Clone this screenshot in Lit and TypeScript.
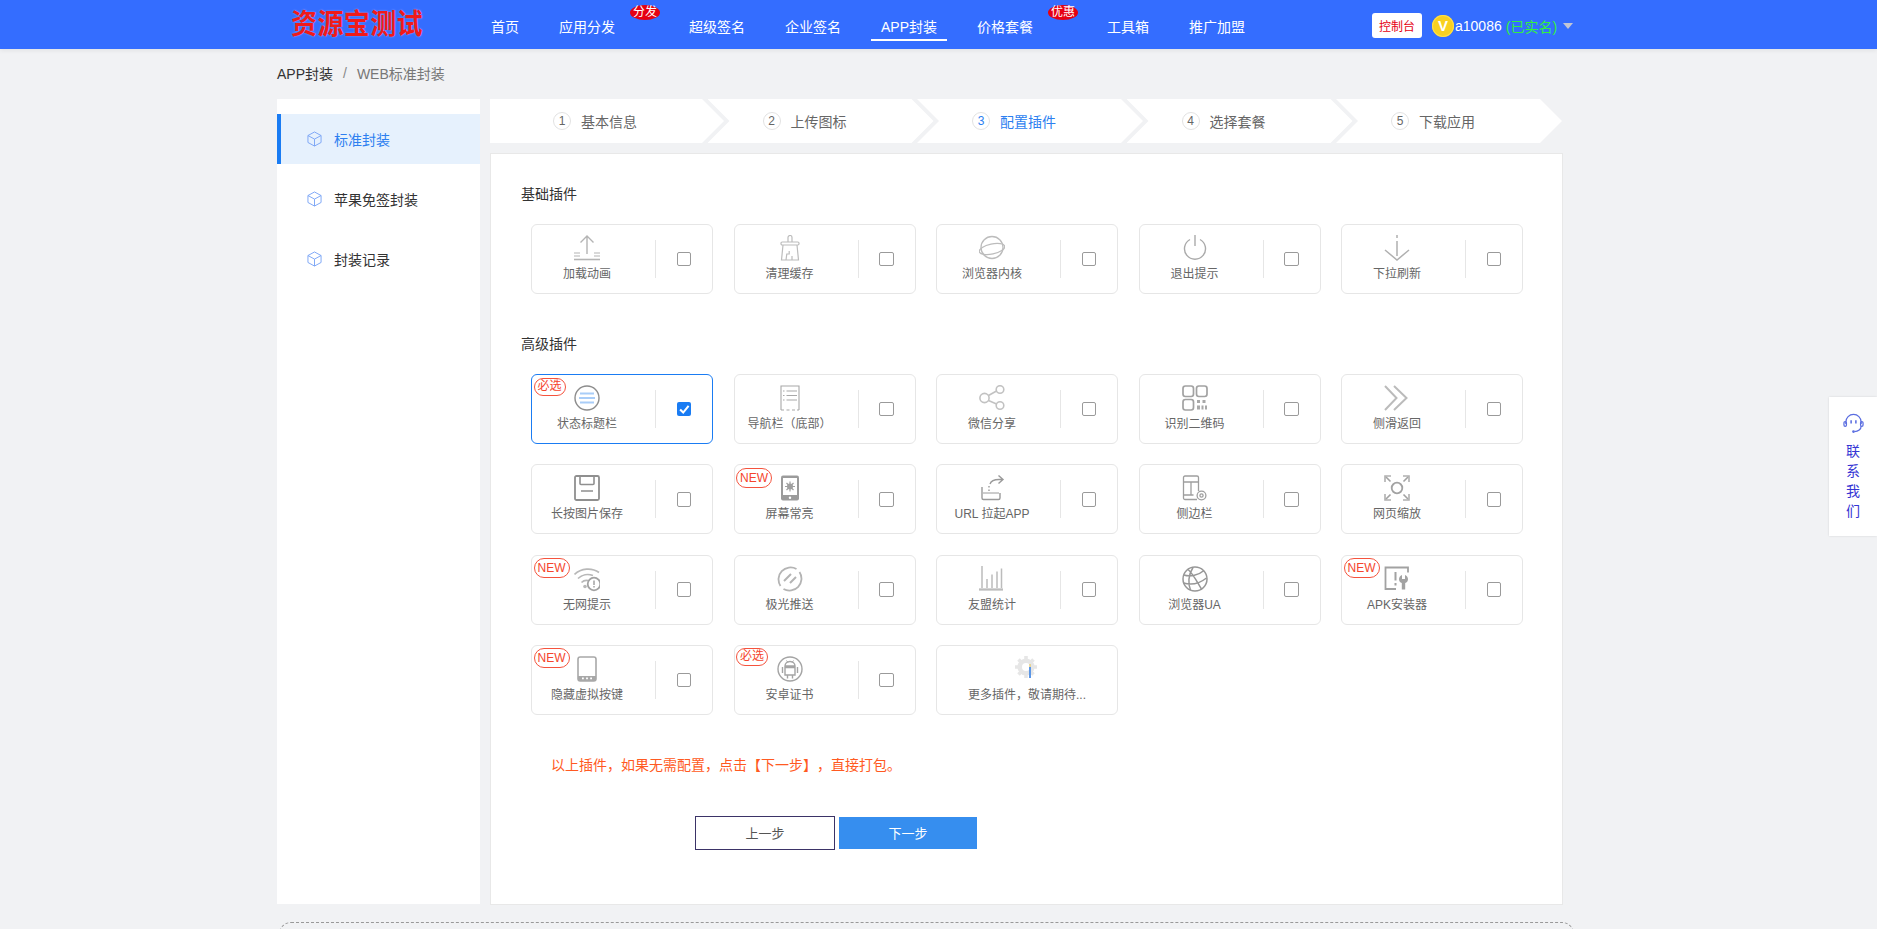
import { css, html, LitElement, svg } from "lit";
import { customElement } from "lit/decorators.js";

type Plugin = {
  name: string;
  icon: keyof typeof icons;
  badge?: "必选" | "NEW";
  checked?: boolean;
};

const icons = {
  upload: svg`<g fill="none" stroke="#b4b4b4" stroke-width="1.4">
    <path d="M13 1v18M6.500 7.500 13 1l6.500 6.500"/>
    <path d="M0 18h6M0 21h6M20 18h6M20 21h6" stroke-width="1.2"/>
    <path d="M0 24.500h26" stroke-width="1.6"/></g>`,
  broom: svg`<g fill="none" stroke="#bcbcbc" stroke-width="1.2">
    <path d="M11 7V2.500a2 2 0 0 1 4 0V7"/>
    <rect x="4" y="7" width="18" height="3" rx="1.2"/>
    <path d="M6 10 4.500 25h17L20 10M9 25l.8-6h2.400v-3M15 25v-4"/></g>`,
  planet: svg`<g fill="none" stroke="#bcbcbc" stroke-width="1.3">
    <circle cx="13" cy="12.500" r="11"/>
    <ellipse cx="13" cy="14" rx="13" ry="5" transform="rotate(-12 13 14)"/></g>`,
  power: svg`<g fill="none" stroke="#aaa" stroke-width="1.4">
    <path d="M13 0v11M8 4.500a10.500 10.500 0 1 0 10 0"/></g>`,
  down: svg`<g fill="none" stroke="#b0b0b0" stroke-width="1.5">
    <path d="M13 0v3M13 6v15M1 15l12 10 12-10"/></g>`,
  status: svg`<circle cx="13" cy="13" r="12" fill="none" stroke="#8d8d8d" stroke-width="1.4"/>
    <path d="M6 8.500h14M5 13h16M6 17.500h14" stroke="#a9cdf8" stroke-width="1.8"/>`,
  navbar: svg`<g fill="none" stroke="#a8a8a8" stroke-width="1.1">
    <path d="M4 25V1h18v24"/>
    <path d="M4 25h3M9.500 25h3M15 25h3M20 25h2"/>
    <path d="M6 6h1.500M9.500 6H20M6 10.500h1.500M9.500 10.500H20M6 15h1.500M9.500 15H20" /></g>`,
  share: svg`<g fill="none" stroke="#c2c2c2" stroke-width="1.6">
    <circle cx="5.500" cy="13" r="4.600"/><circle cx="21" cy="4.500" r="3.800"/><circle cx="21" cy="20.500" r="3.800"/>
    <path d="m9.500 10.500 8-4.500M9.500 15.500l8 3.500"/></g>`,
  qr: svg`<g fill="none" stroke="#a2a2a2" stroke-width="1.7">
    <rect x="1" y="1" width="10.500" height="10.500" rx="2.400"/>
    <rect x="14.500" y="1" width="10.500" height="10.500" rx="2.400"/>
    <rect x="1" y="14.500" width="10.500" height="10.500" rx="2.400"/></g>
    <path d="M15 15h3v3h-3zM20.500 15h3v3h-3zM15 20.500h3v4h-3zM19.500 20.500h2v4h-2zM23 20.500h2v4h-2z" fill="#a8a8a8"/>`,
  chevrons: svg`<g fill="none" stroke="#bbb" stroke-width="2">
    <path d="M1 1l11.500 12L1 25M10 1l12.500 12L10 25"/></g>`,
  save: svg`<g fill="none" stroke="#8f8f8f" stroke-width="1.8">
    <rect x="1" y="1" width="24" height="24" rx="1.500"/>
    <path d="M6 1v7.500a1 1 0 0 0 1 1h12a1 1 0 0 0 1-1V1M7 16h12" stroke-width="1.600"/></g>`,
  screen: svg`<rect x="4" y="0.500" width="18" height="25" rx="2" fill="#9b9b9b"/>
    <rect x="6" y="3" width="14" height="17" fill="#fff"/>
    <circle cx="13" cy="22.800" r="1.200" fill="#fff"/>
    <g stroke="#a0a0a0" stroke-width="1.200"><circle cx="13" cy="11.500" r="2.400" fill="#a0a0a0"/>
    <path d="M13 6.500v10M8 11.500h10M9.500 8l7 7M16.500 8l-7 7"/></g>`,
  url: svg`<g fill="none" stroke="#9a9a9a" stroke-width="1.400">
    <path d="M3 12v11a1.500 1.500 0 0 0 1.500 1.500h15A1.500 1.500 0 0 0 21 23v-5"/>
    <path d="M4 18h16" stroke-width="1"/>
    <path d="M10 16v-1.500M10 12.500V11M11 9c1-3 5-4.500 9-4.500h4M19.500 0.500l4.500 4-4.500 4"/></g>`,
  side: svg`<g fill="none" stroke="#9e9e9e" stroke-width="1.300">
    <path d="M15 24.500H3a1.500 1.500 0 0 1-1.500-1.500V2.500A1.500 1.500 0 0 1 3 1h12a1.500 1.500 0 0 1 1.500 1.500V16"/>
    <path d="M1.500 7h15M1.500 20h10M9 7v13"/>
    <circle cx="19.500" cy="20.500" r="4.400"/><circle cx="19.500" cy="20.500" r="1.600"/></g>`,
  zoom: svg`<g fill="none" stroke="#a2a2a2" stroke-width="1.600">
    <circle cx="13" cy="13" r="5.300" stroke-width="1.800"/>
    <path d="M1 7V1h6M25 7V1h-6M1 19v6h6M25 19v6h-6" stroke="#b0b0b0"/>
    <path d="M2 2l4.500 4.500M24 2l-4.500 4.500M2 24l4.500-4.500M24 24l-4.500-4.500"/></g>`,
  wifi: svg`<g fill="none" stroke="#b8b8b8" stroke-width="1.700">
    <path d="M0.500 8.500C7 2 18 1.500 25 6.500M4 12.500c4-4 10-5 15-3M7.500 16.500c2-2 4.500-2.500 6.500-2"/></g>
    <circle cx="11" cy="20.500" r="1.800" fill="#b8b8b8"/>
    <circle cx="20" cy="18" r="6.300" fill="#fff" stroke="#a2a2a2" stroke-width="1.800"/>
    <path d="M20 14.500v4.500M20 20v1.500" stroke="#a2a2a2" stroke-width="1.500"/>`,
  aurora: svg`<g fill="none" stroke="#b4b4b4" stroke-width="1.800">
    <path d="M3.500 20A12 12 0 0 1 19.500 3M22.500 6A12 12 0 0 1 6.500 23"/>
    <path d="M7 15l7-7M13 17l6-6" stroke-width="2"/></g>`,
  stats: svg`<g fill="none" stroke="#bcbcbc" stroke-width="1.500">
    <path d="M3 0v22M0 23.500h24" /><path d="M0 23.500h24" stroke-width="2"/>
    <path d="M8 22v-9M13 22V8.500M18 22V5.500M22.500 22V2.500"/></g>`,
  globe: svg`<g fill="none" stroke="#979797" stroke-width="1.500">
    <circle cx="13" cy="13" r="12"/>
    <path d="M6 3.500c5 4 10 14 13.500 19.500M2 9c6 2 15 0 20-4.500M1.500 17c8 2.500 16 .5 23-5M11 1.500C6 9 6 18 8.500 24"/></g>`,
  apk: svg`<g fill="none" stroke="#a2a2a2" stroke-width="1.800">
    <path d="M12 23H1.500V1.500h22.500v5"/><path d="M11.500 6v8.500M11.500 17v2.500" stroke-width="2"/></g>
    <path d="M18 9v4h3V9c2 .8 3 2.400 3 4.200 0 1.800-1.200 3.300-2.800 3.800v6.500h-3.400V17c-1.600-.5-2.800-2-2.800-3.800 0-1.800 1-3.400 3-4.200z" fill="#a2a2a2"/>`,
  keys: svg`<rect x="4" y="1" width="18" height="24" rx="2.200" fill="#fff" stroke="#a8a8a8" stroke-width="1.600"/>
    <path d="M4 20h18v3a2 2 0 0 1-2 2H6a2 2 0 0 1-2-2z" fill="#a8a8a8"/>
    <path d="M8 21.500h1.800v1.800H8zM12.100 21.500h1.800v1.800h-1.800zM16.200 21.500H18v1.800h-1.800z" fill="#fff"/>`,
  android: svg`<circle cx="13" cy="13" r="12" fill="none" stroke="#a4a4a4" stroke-width="1.400"/>
    <g fill="none" stroke="#a4a4a4" stroke-width="1.400">
    <path d="M8 10a5 4.500 0 0 1 10 0zM8 11.500h10v7.500H8zM5.500 11v6M20.500 11v6M10.500 19v3.500M15.500 19v3.500"/>
    <path d="M9.500 4.500l1.500 2M16.500 4.500l-1.500 2" stroke-width="1"/></g>`,
  more: svg`<g stroke="#e6e6e6" fill="none">
    <circle cx="12" cy="11" r="6.300" stroke-width="4.600"/>
    <path d="M12 0v4M12 18v4M1 11h4M19 11h4M4.500 3.500l3 3M16.500 15.500l3 3M19.500 3.500l-3 3M7.500 15.500l-3 3" stroke-width="3.600"/></g>
    <path d="M16 11v11" stroke="#5b96e6" stroke-width="2"/><path d="M16 8v3" stroke="#e8cf7e" stroke-width="1.500"/>`,
};

const basicPlugins: Plugin[] = [
  { name: "加载动画", icon: "upload" },
  { name: "清理缓存", icon: "broom" },
  { name: "浏览器内核", icon: "planet" },
  { name: "退出提示", icon: "power" },
  { name: "下拉刷新", icon: "down" },
];

const advancedPlugins: Plugin[] = [
  { name: "状态标题栏", icon: "status", badge: "必选", checked: true },
  { name: "导航栏（底部）", icon: "navbar" },
  { name: "微信分享", icon: "share" },
  { name: "识别二维码", icon: "qr" },
  { name: "侧滑返回", icon: "chevrons" },
  { name: "长按图片保存", icon: "save" },
  { name: "屏幕常亮", icon: "screen", badge: "NEW" },
  { name: "URL 拉起APP", icon: "url" },
  { name: "侧边栏", icon: "side" },
  { name: "网页缩放", icon: "zoom" },
  { name: "无网提示", icon: "wifi", badge: "NEW" },
  { name: "极光推送", icon: "aurora" },
  { name: "友盟统计", icon: "stats" },
  { name: "浏览器UA", icon: "globe" },
  { name: "APK安装器", icon: "apk", badge: "NEW" },
  { name: "隐藏虚拟按键", icon: "keys", badge: "NEW" },
  { name: "安卓证书", icon: "android", badge: "必选" },
];

const navItems = [
  { label: "首页" },
  { label: "应用分发", badge: "分发" },
  { label: "超级签名" },
  { label: "企业签名" },
  { label: "APP封装", active: true },
  { label: "价格套餐", badge: "优惠" },
  { label: "工具箱" },
  { label: "推广加盟" },
];

const steps = ["基本信息", "上传图标", "配置插件", "选择套餐", "下载应用"];
const menu = ["标准封装", "苹果免签封装", "封装记录"];

const cube = html`<svg class="cube" viewBox="0 0 16 17" fill="none" stroke="#7aa4f5" stroke-width="1">
  <path d="M8 1 15 4.800v7.400L8 16 1 12.200V4.800zM1 4.800 8 8.600l7-3.800M8 8.600V16"/>
</svg>`;

@customElement("app-root")
export class AppRoot extends LitElement {
  renderCard(p: Plugin) {
    return html`
      <div class="card ${p.checked ? "on" : ""}">
        ${p.badge
          ? html`<span class="badge ${p.badge === "NEW" ? "new" : ""}">${p.badge}</span>`
          : ""}
        <div class="info">
          <svg class="icon" viewBox="0 0 26 26">${icons[p.icon]}</svg>
          <span class="name">${p.name}</span>
        </div>
        <i class="divider"></i>
        <div class="check-wrap">
          <span class="check ${p.checked ? "checked" : ""}">
            ${p.checked
              ? html`<svg viewBox="0 0 14 14"><path d="M3 7.200 6 10.200 11.200 3.800" fill="none" stroke="#fff" stroke-width="2"/></svg>`
              : ""}
          </span>
        </div>
      </div>
    `;
  }

  render() {
    return html`
      <header>
        <div class="logo"><span>资源宝测试</span></div>
        <nav>
          ${navItems.map(
            (n) => html`
              <a class="nav-item ${n.active ? "active" : ""} ${n.badge ? "has-badge" : ""}">
                ${n.label}
                ${n.badge ? html`<em class="hot">${n.badge}</em>` : ""}
              </a>
            `
          )}
        </nav>
        <div class="user">
          <button class="console">控制台</button>
          <span class="coin">V</span>
          <span class="uname">a10086</span>
          <span class="real">(已实名)</span>
          <i class="caret"></i>
        </div>
      </header>

      <div class="crumb"><b>APP封装</b><span class="sep">/</span><span>WEB标准封装</span></div>

      <main>
        <aside>
          ${menu.map(
            (m, i) => html`<div class="menu-item ${i === 0 ? "active" : ""}">${cube}<span>${m}</span></div>`
          )}
        </aside>
        <section class="content">
          <div class="steps">
            ${steps.map(
              (s, i) => html`
                <div class="step ${i === 2 ? "current" : ""}">
                  <span class="num">${i + 1}</span><span>${s}</span>
                </div>
              `
            )}
          </div>
          <div class="panel">
            <h4>基础插件</h4>
            <div class="grid">${basicPlugins.map((p) => this.renderCard(p))}</div>
            <h4 class="second">高级插件</h4>
            <div class="grid">
              ${advancedPlugins.map((p) => this.renderCard(p))}
              <div class="card">
                <div class="info wide">
                  <svg class="icon" viewBox="0 0 26 26">${icons.more}</svg>
                  <span class="name">更多插件，敬请期待...</span>
                </div>
              </div>
            </div>
            <p class="note">以上插件，如果无需配置，点击【下一步】，直接打包。</p>
            <div class="actions">
              <button class="prev">上一步</button>
              <button class="next">下一步</button>
            </div>
          </div>
        </section>
      </main>
      <div class="dashed"></div>

      <div class="contact">
        <svg viewBox="0 0 22 22" fill="none" stroke="#5a6de0" stroke-width="1.300">
          <path d="M3 11.500V9.500a8 8 0 0 1 16 0v2M19 13.500c0 3.500-3 6-7 6"/>
          <rect x="1" y="9" width="2.600" height="5" rx="1.300"/><rect x="18.400" y="9" width="2.600" height="5" rx="1.300"/>
          <path d="M8.500 7.500v3.500M13.500 7.500v3.500" stroke-width="1.600"/>
          <circle cx="11" cy="19.500" r=".8"/>
        </svg>
        <span>联</span><span>系</span><span>我</span><span>们</span>
      </div>
    `;
  }

  static styles = css`
    :host {
      display: block;
      position: relative;
      height: 929px;
      overflow: hidden;
      background: #f1f2f4;
      color: #333;
      font: 14px "Liberation Sans", "Noto Sans CJK SC", sans-serif;
      text-spacing-trim: space-all;
    }

    header {
      display: flex;
      align-items: center;
      height: 49px;
      background: #346dff;
      box-shadow: 0 2px 4px rgba(0, 0, 0, 0.06);
    }
    .logo {
      width: 132px;
      margin-left: 291px;
      font-size: 26px;
      line-height: 49px;
      font-weight: 700;
      letter-spacing: 0.4px;
      color: #f01a1a;
      text-shadow: 0 0 2px #9aa6ff;
      white-space: nowrap;
    }
    .logo span {
      display: inline-block;
      transform: scaleY(1.08);
    }
    nav {
      display: flex;
      height: 49px;
      margin-left: 58px;
    }
    .nav-item {
      position: relative;
      display: flex;
      align-items: center;
      height: 49px;
      box-sizing: border-box;
      padding: 3px 10px 0;
      margin-right: 20px;
      color: #fff;
      white-space: nowrap;
    }
    .nav-item.has-badge {
      padding-right: 44px;
    }
    .nav-item.active::after {
      content: "";
      position: absolute;
      left: 0;
      right: 0;
      bottom: 8px;
      height: 2px;
      background: #fff;
    }
    .hot {
      position: absolute;
      top: 5px;
      right: -1px;
      width: 30px;
      height: 15px;
      border-radius: 50%;
      background: #e60012;
      color: #fff;
      font-size: 12px;
      font-style: normal;
      line-height: 15px;
      text-align: center;
    }
    .user {
      display: flex;
      align-items: center;
      position: absolute;
      left: 1372px;
      top: 13px;
      height: 25px;
      color: #fff;
      white-space: nowrap;
    }
    .console {
      width: 50px;
      height: 25px;
      padding: 0;
      border: 0;
      border-radius: 3px;
      background: #fff;
      color: #e60012;
      font: inherit;
      font-size: 12px;
    }
    .coin {
      width: 22px;
      height: 22px;
      margin: 0 1px 0 10px;
      border-radius: 50%;
      background: #f9d020;
      box-shadow: inset 0 0 0 1px #ffdf4a;
      text-align: center;
      line-height: 22px;
      font-size: 15px;
      font-weight: 700;
    }
    .real {
      margin-left: 4px;
      color: #33f03f;
    }
    .caret {
      margin: 0 0 0 6px;
      border: 5.500px solid transparent;
      border-top: 6px solid #c2c6d4;
      border-bottom: 0;
    }

    .crumb {
      display: flex;
      align-items: center;
      box-sizing: border-box;
      height: 50px;
      padding: 0 0 2px 277px;
      color: #777;
    }
    .crumb b {
      font-weight: 400;
      color: #333;
    }
    .sep {
      margin: 0 10px;
      color: #888;
    }

    main {
      display: flex;
      gap: 10px;
      padding-left: 277px;
    }
    aside {
      display: flex;
      flex-direction: column;
      gap: 10px;
      box-sizing: border-box;
      width: 203px;
      height: 805px;
      padding-top: 15px;
      background: #fff;
    }
    .menu-item {
      display: flex;
      align-items: center;
      gap: 12px;
      height: 50px;
      padding-left: 30px;
    }
    .menu-item.active {
      padding-left: 26px;
      border-left: 4px solid #1a7cf3;
      background: #e6f1fd;
      color: #2d7ff0;
    }
    .cube {
      width: 15px;
      height: 16px;
    }

    .content {
      width: 1072px;
    }
    .steps {
      display: flex;
      height: 44px;
      margin-bottom: 10px;
    }
    .step {
      display: flex;
      align-items: center;
      flex: none;
      box-sizing: border-box;
      width: 226px;
      margin-right: -16.500px;
      padding-left: 55px;
      background: #fff;
      color: #666;
      clip-path: polygon(0 0, calc(100% - 22px) 0, 100% 50%, calc(100% - 22px) 100%, 0 100%, 22px 50%);
    }
    .step:first-child {
      width: 234px;
      padding-left: 63px;
      clip-path: polygon(0 0, calc(100% - 22px) 0, 100% 50%, calc(100% - 22px) 100%, 0 100%);
    }
    .step:last-child {
      margin-right: 0;
    }
    .step.current {
      color: #2d7ff0;
    }
    .num {
      flex: none;
      box-sizing: border-box;
      width: 18px;
      height: 18px;
      margin-right: 10px;
      border: 1px solid #e2e2e2;
      border-radius: 50%;
      font-size: 12px;
      line-height: 16px;
      text-align: center;
    }

    .panel {
      box-sizing: border-box;
      width: 1073px;
      height: 752px;
      padding: 30px 0 0 30px;
      background: #fff;
      border: 1px solid #e8e8e8;
    }
    h4 {
      margin: 0 0 20px;
      font-size: 14px;
      font-weight: 400;
      line-height: 20px;
      color: #333;
    }
    h4.second {
      margin: 39.500px 0 20.500px;
    }
    .grid {
      display: grid;
      grid-template-columns: repeat(5, 182px);
      grid-auto-rows: 70px;
      gap: 20.300px 20.500px;
      margin-left: 10px;
    }
    .card {
      position: relative;
      display: flex;
      align-items: center;
      box-sizing: border-box;
      border: 1.500px solid #e6e6e6;
      border-radius: 6px;
    }
    .card.on {
      border: 1px solid #1a7cf3;
    }
    .info {
      display: flex;
      flex-direction: column;
      align-items: center;
      align-self: flex-start;
      box-sizing: border-box;
      width: 110px;
      margin-right: 13px;
      padding-top: 10px;
    }
    .info.wide {
      width: 100%;
      margin: 0;
    }
    .icon {
      width: 26px;
      height: 26px;
    }
    .name {
      margin-top: 5px;
      font-size: 12px;
      line-height: 16px;
      color: #666;
      white-space: nowrap;
    }
    .divider {
      flex: none;
      width: 1px;
      height: 38px;
      background: #e6e6e6;
    }
    .check-wrap {
      display: flex;
      flex: 1;
      justify-content: center;
    }
    .check {
      box-sizing: border-box;
      width: 14.500px;
      height: 14.500px;
      border: 1.200px solid #9a9a9a;
      border-radius: 2px;
      background: #fff;
    }
    .check.checked {
      border: 0;
      background: #1a7cf3;
    }
    .check svg {
      display: block;
    }
    .badge {
      position: absolute;
      left: 1.500px;
      top: 2.500px;
      box-sizing: border-box;
      width: 32px;
      height: 18px;
      border: 1px solid #f5533d;
      border-radius: 9px;
      background: #fff;
      color: #f5452d;
      font-size: 12px;
      line-height: 15px;
      text-align: center;
    }
    .badge.new {
      width: 36px;
      height: 20px;
      border-radius: 10px;
      line-height: 18px;
    }

    .note {
      margin: 40px 0 0 30px;
      line-height: 20px;
      color: #ff5a22;
    }
    .actions {
      display: flex;
      align-items: center;
      gap: 4px;
      margin: 41px 0 0 174px;
    }
    .actions button {
      padding: 0;
      font: inherit;
      font-size: 13px;
    }
    .prev {
      width: 140px;
      height: 34px;
      border: 1.500px solid #3b3367;
      background: #fff;
      color: #555;
    }
    .next {
      width: 138px;
      height: 32px;
      border: 0;
      background: #368eef;
      color: #fff;
    }

    .dashed {
      box-sizing: border-box;
      width: 1295px;
      height: 80px;
      margin: 17px 0 0 279px;
      border: 1px dashed #999;
      border-radius: 12px;
    }

    .contact {
      position: absolute;
      right: 0;
      top: 397px;
      display: flex;
      flex-direction: column;
      align-items: center;
      box-sizing: border-box;
      width: 48px;
      height: 139px;
      padding: 16px 0 0 0;
      background: #fff;
      box-shadow: 0 0 2px rgba(0, 0, 0, 0.12);
      color: #3535d4;
      line-height: 20px;
    }
    .contact svg {
      width: 21px;
      height: 21px;
      margin-bottom: 7px;
    }
  `;
}
